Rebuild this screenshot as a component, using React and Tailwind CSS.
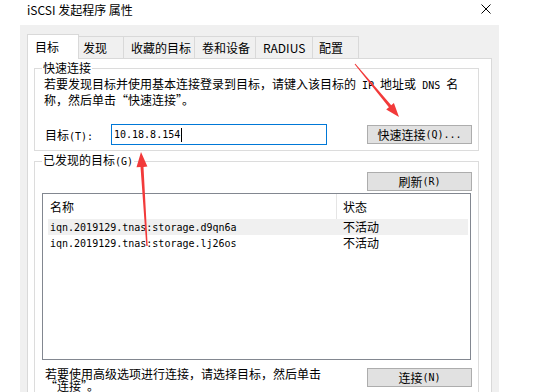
import React from 'react';

const M = ({ children }) => (
  <span className="font-['DejaVu_Sans_Mono',monospace] text-[10px]">{children}</span>
);

const tabs = [
  { label: '发现', w: 'w-[45px] pl-[4px]' },
  { label: '收藏的目标', w: 'w-[71px] pl-[7px]' },
  { label: '卷和设备', w: 'w-[61px] pl-[7px]' },
  { label: 'RADIUS', w: 'w-[57px] pl-[7px]' },
  { label: '配置', w: 'w-[46px] pl-[6px]' },
];

const targets = [
  { name: 'iqn.2019129.tnas:storage.d9qn6a', status: '不活动', hover: true },
  { name: 'iqn.2019129.tnas:storage.lj26os', status: '不活动' },
];

function Button({ children, className = '' }) {
  return (
    <div className={`flex h-[19px] w-[105px] items-center justify-center border border-[#adadad] bg-[#e1e1e1] leading-[17px] ${className}`}>
      {children}
    </div>
  );
}

export default function App() {
  return (
    <div className="relative h-[392px] w-[546px] overflow-hidden bg-white font-['Noto_Sans_CJK_SC',sans-serif] text-[12px] text-black">
      {/* title bar */}
      <div className="flex h-[25px] items-start">
        <span className="pl-[27px] pt-[2px] leading-[16px]">iSCSI 发起程序 属性</span>
        <svg className="ml-auto mr-[55px] mt-[4px]" width="10" height="10" viewBox="0 0 10 10">
          <path d="M0.5 0.5L9.5 9.5M9.5 0.5L0.5 9.5" stroke="#000" strokeWidth="1" />
        </svg>
      </div>

      <div className="ml-[20px] h-[367px] w-[479px] overflow-hidden bg-[#f0f0f0] px-[7px] pt-[9px]">
        {/* tabs */}
        <div className="flex h-[24px] items-end">
          <div className="relative z-10 -mb-px h-[25px] w-[52px] border border-b-0 border-[#d9d9d9] bg-white pl-[7px] leading-[24px]">目标</div>
          {tabs.map((t) => (
            <div key={t.label} className={`h-[22px] border-t border-r border-[#d9d9d9] leading-[21px] ${t.w}`}>{t.label}</div>
          ))}
        </div>

        {/* tab page */}
        <div className="h-[400px] border border-[#d9d9d9] bg-white pl-[6px] pr-[12px]">
          <fieldset className="mt-[1px] border border-[#dcdcdc] pb-[5px]">
            <legend className="ml-[7px] px-[1px] leading-[16px]">快速连接</legend>
            <p className="mt-[1px] pl-[9px] leading-[14px]">
              若要发现目标并使用基本连接登录到目标，请键入该目标的<M> IP </M>地址或<M> DNS </M>名
              <br />
              称，然后单击“快速连接”。
            </p>
            <div className="mt-[17px] flex h-[21px] items-center">
              <span className="w-[76px] pl-[10px]">目标<M>(T):</M></span>
              <div className="flex h-[21px] w-[216px] items-center border border-[#0078d7] pl-[2px]">
                <M>10.18.8.154</M>
                <span className="ml-px h-[14px] w-px bg-black" />
              </div>
              <Button className="ml-auto mr-[6px]">快速连接<M>(Q)...</M></Button>
            </div>
          </fieldset>

          <fieldset className="mt-[1px] h-[300px] border border-[#dcdcdc]">
            <legend className="ml-[7px] px-[1px] leading-[16px]">已发现的目标<M>(G)</M></legend>
            <div className="mt-[2px] flex justify-end pr-[6px]">
              <Button>刷新<M>(R)</M></Button>
            </div>
            <div className="mx-[7px] mt-[2px] h-[167px] border border-[#828790] bg-white">
              <div className="flex h-[25px] leading-[25px]">
                <div className="w-[294px] border-r border-[#e5e5e5] pl-[7px]">名称</div>
                <div className="pl-[6px]">状态</div>
              </div>
              {targets.map((t) => (
                <div key={t.name} className={`ml-[5px] mr-[2px] flex h-[16px] items-center leading-[16px] ${t.hover ? 'bg-[#f0f0f0]' : ''}`}>
                  <div className="w-[295px] pl-[2px]"><M>{t.name}</M></div>
                  <div>{t.status}</div>
                </div>
              ))}
            </div>
            <div className="mt-[8px] flex items-start pr-[6px]">
              <p className="pl-[10px] leading-[12px]">
                若要使用高级选项进行连接，请选择目标，然后单击
                <br />
                “连接”。
              </p>
              <Button className="ml-auto">连接<M>(N)</M></Button>
            </div>
          </fieldset>
        </div>
      </div>

      {/* red annotation arrows */}
      <svg className="pointer-events-none absolute left-0 top-0" width="546" height="392">
        <polygon
          points="354.6,64.3 388.9,107.2 386.2,109.4 399,117 393.9,103 391.2,105.3 355.4,63.7"
          fill="#f23a3a"
        />
        <polygon
          points="141,152 147.4,166.6 143.5,166.9 147.7,246 146.3,246 140.5,167.1 136.5,167.3"
          fill="#f23a3a"
        />
      </svg>
    </div>
  );
}
